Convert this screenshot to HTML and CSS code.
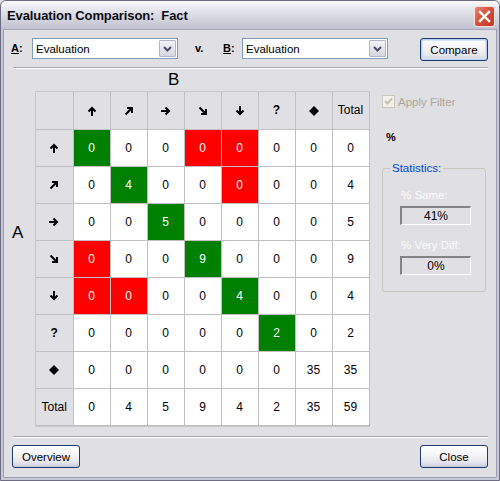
FILE: index.html
```html
<!DOCTYPE html>
<html>
<head>
<meta charset="utf-8">
<link rel="stylesheet" href="styles.css">
</head>
<body>
<div class="window">
  <div class="titlebar">
    <span class="title">Evaluation Comparison:&nbsp; Fact</span>
    <div class="close-x">
      <svg width="21" height="21" viewBox="0 0 21 21"><path d="M6 6 L15 15 M15 6 L6 15" stroke="#fff" stroke-width="2.4" stroke-linecap="square"/></svg>
    </div>
  </div>
  <div class="frame">
    <div class="client">
      <div class="toprow">
        <span class="lbl lbl-a"><u>A</u>:</span>
        <div class="combo"><span class="combo-text">Evaluation</span><span class="dd"><svg width="9" height="6" viewBox="0 0 9 6"><path d="M1 1 L4.5 4.5 L8 1" fill="none" stroke="#4b4b66" stroke-width="2"/></svg></span></div>
        <span class="vs">v.</span>
        <span class="lbl lbl-b"><u>B</u>:</span>
        <div class="combo"><span class="combo-text">Evaluation</span><span class="dd"><svg width="9" height="6" viewBox="0 0 9 6"><path d="M1 1 L4.5 4.5 L8 1" fill="none" stroke="#4b4b66" stroke-width="2"/></svg></span></div>
        <button class="btn btn-default compare">Compare</button>
      </div>
      <div class="sep"></div>
      <div class="main">
        <div class="side-a">A</div>
        <div class="matrix">
          <div class="b-label">B</div>
          <div class="gridbox">
            <table class="grid">
              <tr class="hdr">
                <td></td>
                <td><svg class="ic" viewBox="0 0 10 10"><path d="M5 10 V2 M1.5 5.5 L5 2 L8.5 5.5" fill="none" stroke="#000" stroke-width="2"/></svg></td>
                <td><svg class="ic" viewBox="0 0 10 10"><path d="M1.5 8.5 L7.5 2.5 M3 2 H8 V7" fill="none" stroke="#000" stroke-width="2"/></svg></td>
                <td><svg class="ic" viewBox="0 0 10 10"><path d="M0 5 H8 M4.5 1.5 L8 5 L4.5 8.5" fill="none" stroke="#000" stroke-width="2"/></svg></td>
                <td><svg class="ic" viewBox="0 0 10 10"><path d="M1.5 1.5 L7.5 7.5 M3 8 H8 V3" fill="none" stroke="#000" stroke-width="2"/></svg></td>
                <td><svg class="ic" viewBox="0 0 10 10"><path d="M5 0 V8 M1.5 4.5 L5 8 L8.5 4.5" fill="none" stroke="#000" stroke-width="2"/></svg></td>
                <td class="q">?</td>
                <td><svg class="ic" viewBox="0 0 10 10"><path d="M5 0 L10 5 L5 10 L0 5 Z" fill="#000"/></svg></td>
                <td>Total</td>
              </tr>
              <tr>
                <td class="rh"><svg class="ic" viewBox="0 0 10 10"><path d="M5 10 V2 M1.5 5.5 L5 2 L8.5 5.5" fill="none" stroke="#000" stroke-width="2"/></svg></td>
                <td class="g">0</td><td>0</td><td>0</td><td class="r">0</td><td class="r">0</td><td>0</td><td>0</td><td>0</td>
              </tr>
              <tr>
                <td class="rh"><svg class="ic" viewBox="0 0 10 10"><path d="M1.5 8.5 L7.5 2.5 M3 2 H8 V7" fill="none" stroke="#000" stroke-width="2"/></svg></td>
                <td>0</td><td class="g">4</td><td>0</td><td>0</td><td class="r">0</td><td>0</td><td>0</td><td>4</td>
              </tr>
              <tr>
                <td class="rh"><svg class="ic" viewBox="0 0 10 10"><path d="M0 5 H8 M4.5 1.5 L8 5 L4.5 8.5" fill="none" stroke="#000" stroke-width="2"/></svg></td>
                <td>0</td><td>0</td><td class="g">5</td><td>0</td><td>0</td><td>0</td><td>0</td><td>5</td>
              </tr>
              <tr>
                <td class="rh"><svg class="ic" viewBox="0 0 10 10"><path d="M1.5 1.5 L7.5 7.5 M3 8 H8 V3" fill="none" stroke="#000" stroke-width="2"/></svg></td>
                <td class="r">0</td><td>0</td><td>0</td><td class="g">9</td><td>0</td><td>0</td><td>0</td><td>9</td>
              </tr>
              <tr>
                <td class="rh"><svg class="ic" viewBox="0 0 10 10"><path d="M5 0 V8 M1.5 4.5 L5 8 L8.5 4.5" fill="none" stroke="#000" stroke-width="2"/></svg></td>
                <td class="r">0</td><td class="r">0</td><td>0</td><td>0</td><td class="g">4</td><td>0</td><td>0</td><td>4</td>
              </tr>
              <tr>
                <td class="rh q">?</td>
                <td>0</td><td>0</td><td>0</td><td>0</td><td>0</td><td class="g">2</td><td>0</td><td>2</td>
              </tr>
              <tr>
                <td class="rh"><svg class="ic" viewBox="0 0 10 10"><path d="M5 0 L10 5 L5 10 L0 5 Z" fill="#000"/></svg></td>
                <td>0</td><td>0</td><td>0</td><td>0</td><td>0</td><td>0</td><td>35</td><td>35</td>
              </tr>
              <tr>
                <td class="rh">Total</td>
                <td>0</td><td>4</td><td>5</td><td>9</td><td>4</td><td>2</td><td>35</td><td>59</td>
              </tr>
            </table>
          </div>
        </div>
        <div class="panel">
          <div class="chk-row">
            <span class="chk"><svg width="11" height="11" viewBox="0 0 11 11"><path d="M2 5 L4.5 7.5 L9 2.5" fill="none" stroke="#c2c0b0" stroke-width="2"/></svg></span>
            <span class="chk-text">Apply Filter</span>
          </div>
          <div class="pct">%</div>
          <div class="group">
            <span class="legend">Statistics:</span>
            <div class="stat-label">% Same:</div>
            <div class="stat-box">41%</div>
            <div class="stat-label second">% Very Diff:</div>
            <div class="stat-box">0%</div>
          </div>
        </div>
      </div>
      <div class="sep"></div>
      <div class="bottomrow">
        <button class="btn overview">Overview</button>
        <button class="btn closebtn">Close</button>
      </div>
    </div>
  </div>
</div>
</body>
</html>
```

FILE: styles.css
```css
* { box-sizing: border-box; }
html, body { margin: 0; padding: 0; }
body {
  width: 500px;
  height: 481px;
  background: #e0dfe3;
  font-family: "Liberation Sans", Arial, sans-serif;
  font-size: 11px;
  color: #000;
  overflow: hidden;
}
.window {
  width: 500px;
  height: 481px;
  border: 1px solid #6c6c82;
  border-radius: 6px 6px 0 0;
  display: flex;
  flex-direction: column;
  background: #c8c8d6;
  overflow: hidden;
}
.titlebar {
  height: 28px;
  flex: none;
  display: flex;
  align-items: center;
  justify-content: space-between;
  padding: 0 4px 0 6px;
  background: linear-gradient(#fbfbfd 0%, #e6e6ee 30%, #d6d6e0 60%, #c2c2d2 100%);
}
.title {
  font-weight: bold;
  font-size: 13px;
  color: #0c0c14;
  letter-spacing: -0.1px;
}
.close-x {
  width: 21px;
  height: 21px;
  border-radius: 3px;
  border: 1px solid #f4e0dc;
  background: linear-gradient(135deg, #e8826c 0%, #d4503a 50%, #c0392a 100%);
  display: flex;
  align-items: center;
  justify-content: center;
  margin-top: 2px;
}
.close-x svg { display: block; margin: -1px; }
.frame {
  flex: 1;
  padding: 0 3px 3px 3px;
  background: #c8c8d6;
  display: flex;
  border-top: 0;
}
.client {
  flex: 1;
  background: #e0dfe3;
  border-top: 1px solid #a8a8bc;
  box-shadow: -1px 0 0 #9a9aae, 1px 0 0 #9a9aae, 0 1px 0 #9a9aae;
  display: flex;
  flex-direction: column;
  padding: 8px 8px 9px 7px;
}
.toprow {
  display: flex;
  align-items: flex-start;
  height: 23px;
  flex: none;
}
.lbl {
  font-weight: bold;
  font-size: 11px;
  line-height: 21px;
}
.lbl-a { width: 21px; }
.lbl-b { width: 19px; }
.combo {
  width: 146px;
  height: 21px;
  border: 1px solid #7f9db9;
  background: #fff;
  display: flex;
  align-items: center;
  justify-content: space-between;
  padding: 0 1px 0 3px;
}
.combo-text { font-size: 11.5px; }
.dd {
  width: 17px;
  height: 17px;
  border: 1px solid #b4b4c8;
  border-radius: 1px;
  background: linear-gradient(#f2f2f6, #d6d6e2);
  display: flex;
  align-items: center;
  justify-content: center;
}
.dd svg { display: block; }
.vs {
  font-weight: bold;
  line-height: 21px;
  margin-left: 17px;
  width: 28px;
}
.btn {
  font-family: "Liberation Sans", Arial, sans-serif;
  font-size: 11.5px;
  color: #000;
  width: 68px;
  height: 23px;
  border: 1px solid #1c3c6c;
  border-radius: 3px;
  background: linear-gradient(#ffffff 0%, #f4f4f6 45%, #e4e4ec 80%, #c8c8d8 100%);
  padding: 0;
  display: flex;
  align-items: center;
  justify-content: center;
}
.btn-default { box-shadow: inset 0 0 0 1px #b8cdf4, inset 0 0 0 2px #dae4f8; }
.compare { margin-left: auto; }
.sep {
  flex: none;
  height: 2px;
  border-top: 1px solid #a7a6aa;
  border-bottom: 1px solid #ffffff;
  margin: 6px 0 0 2px;
}
.main {
  flex: 1;
  display: flex;
  align-items: flex-start;
}
.side-a {
  width: 24px;
  padding-left: 1px;
  font-size: 17px;
  line-height: 20px;
  margin-top: 154px;
}
.matrix {
  width: 335px;
  display: flex;
  flex-direction: column;
}
.b-label {
  height: 22px;
  font-size: 17px;
  line-height: 22px;
  padding-left: 133px;
}
.gridbox {
  border: 1px solid #c8c8cc;
  width: 335px;
}
.grid {
  border-collapse: collapse;
  font-size: 12px;
}
.grid td {
  border: 1px solid #c0c0c0;
  width: 37px;
  min-width: 37px;
  height: 37px;
  padding: 0;
  text-align: center;
  vertical-align: middle;
  background: #fff;
}
.grid tr:first-child td { border-top: 0; }
.grid td:first-child { border-left: 0; }
.grid tr.hdr td, .grid td.rh { background: #e0dfe3; }
.grid td.g { background: #008000; color: #fff; }
.grid td.r { background: #ff0000; color: #fff; }
.grid td.q { font-weight: bold; font-size: 12px; }
.ic { width: 10px; height: 10px; display: inline-block; vertical-align: middle; }
.panel {
  margin-left: 12px;
  width: 104px;
  display: flex;
  flex-direction: column;
}
.chk-row {
  margin-top: 26px;
  display: flex;
  align-items: center;
  height: 13px;
}
.chk {
  width: 13px;
  height: 13px;
  border: 1px solid #cac8bb;
  background: #f2f1ec;
  display: flex;
  align-items: center;
  justify-content: center;
}
.chk svg { display: block; }
.chk-text {
  margin-left: 3px;
  color: #aca899;
  font-size: 11.5px;
}
.pct {
  margin-top: 22px;
  margin-left: 4px;
  font-weight: bold;
  font-size: 11px;
  line-height: 14px;
}
.group {
  position: relative;
  margin-top: 24px;
  width: 104px;
  height: 124px;
  border: 1px solid #c8c6bc;
  border-radius: 3px;
  padding: 19px 0 0 17px;
}
.legend {
  position: absolute;
  top: -7px;
  left: 7px;
  padding: 0 2px 0 2px;
  background: #e0dfe3;
  color: #0046d5;
  font-size: 11.5px;
  line-height: 13px;
}
.stat-label {
  color: #fbfbfb;
  font-size: 11.5px;
  line-height: 14px;
  padding-left: 1px;
}
.stat-label.second { margin-top: 13px; }
.stat-box {
  margin-top: 4px;
  width: 71px;
  height: 19px;
  border-top: 2px solid #838383;
  border-left: 2px solid #838383;
  border-right: 1px solid #fff;
  border-bottom: 1px solid #fff;
  background: #e0dfe3;
  text-align: center;
  font-size: 12px;
  line-height: 16px;
}
.bottomrow {
  flex: none;
  display: flex;
  justify-content: space-between;
  margin-top: 7px;
  padding-left: 1px;
}
```
